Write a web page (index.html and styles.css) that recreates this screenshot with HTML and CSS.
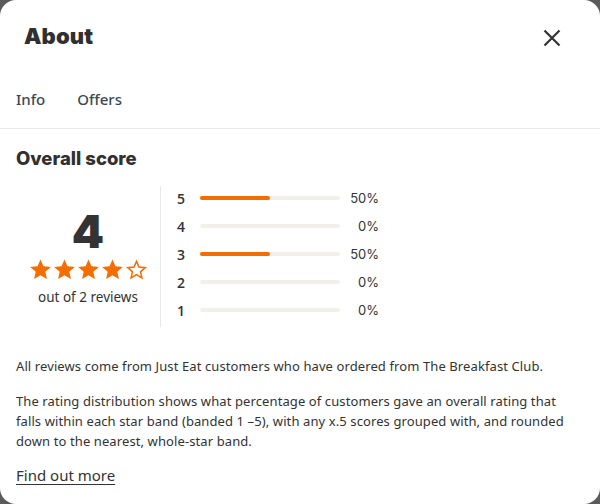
FILE: index.html
```html
<!DOCTYPE html>
<html>
<head>
<meta charset="utf-8">
<link rel="stylesheet" href="styles.css">
</head>
<body>
<div class="modal">
  <header class="head">
    <h1 class="title">About</h1>
    <button class="close" aria-label="Close">
      <svg width="18" height="18" viewBox="0 0 18 18"><path d="M1.5 1.5L16.5 16.5M16.5 1.5L1.5 16.5" stroke="#333" stroke-width="2.2" fill="none"/></svg>
    </button>
  </header>
  <nav class="tabs">
    <span class="tab">Info</span>
    <span class="tab">Offers</span>
  </nav>
  <section class="content">
    <h2 class="subtitle">Overall score</h2>
    <div class="score">
      <div class="summary">
        <div class="big">4</div>
        <div class="stars">
          <svg viewBox="0 0 24 24" class="star"><path d="M12 1.5l3.1 7.1 7.7.7-5.8 5.1 1.7 7.6L12 18l-6.7 4 1.7-7.6-5.8-5.1 7.7-.7z" fill="#f36d00"/></svg>
          <svg viewBox="0 0 24 24" class="star"><path d="M12 1.5l3.1 7.1 7.7.7-5.8 5.1 1.7 7.6L12 18l-6.7 4 1.7-7.6-5.8-5.1 7.7-.7z" fill="#f36d00"/></svg>
          <svg viewBox="0 0 24 24" class="star"><path d="M12 1.5l3.1 7.1 7.7.7-5.8 5.1 1.7 7.6L12 18l-6.7 4 1.7-7.6-5.8-5.1 7.7-.7z" fill="#f36d00"/></svg>
          <svg viewBox="0 0 24 24" class="star"><path d="M12 1.5l3.1 7.1 7.7.7-5.8 5.1 1.7 7.6L12 18l-6.7 4 1.7-7.6-5.8-5.1 7.7-.7z" fill="#f36d00"/></svg>
          <svg viewBox="0 0 24 24" class="star"><path d="M12 3.5l2.6 6 6.5.6-4.9 4.3 1.45 6.4L12 17.4l-5.65 3.4 1.45-6.4-4.9-4.3 6.5-.6z" fill="none" stroke="#f36d00" stroke-width="1.6" stroke-linejoin="miter"/></svg>
        </div>
        <div class="count">out of 2 reviews</div>
      </div>
      <div class="bars">
        <div class="row"><span class="num">5</span><span class="track"><span class="fill" style="width:50%"></span></span><span class="pct">50%</span></div>
        <div class="row"><span class="num">4</span><span class="track"><span class="fill" style="width:0%"></span></span><span class="pct">0%</span></div>
        <div class="row"><span class="num">3</span><span class="track"><span class="fill" style="width:50%"></span></span><span class="pct">50%</span></div>
        <div class="row"><span class="num">2</span><span class="track"><span class="fill" style="width:0%"></span></span><span class="pct">0%</span></div>
        <div class="row"><span class="num">1</span><span class="track"><span class="fill" style="width:0%"></span></span><span class="pct">0%</span></div>
      </div>
    </div>
    <p class="text">All reviews come from Just Eat customers who have ordered from The Breakfast Club.</p>
    <p class="text">The rating distribution shows what percentage of customers gave an overall rating that falls within each star band (banded 1 –5), with any x.5 scores grouped with, and rounded down to the nearest, whole-star band.</p>
    <a class="more" href="#">Find out more</a>
  </section>
</div>
</body>
</html>
```
FILE: styles.css
```css
* { box-sizing: border-box; }
html, body { margin: 0; padding: 0; }
body {
  background: #5b5b5b;
  width: 600px;
  height: 504px;
  overflow: hidden;
  font-family: "Noto Sans", sans-serif;
  color: #333;
}
.modal {
  background: #fff;
  width: 600px;
  height: 504px;
  border-radius: 16px;
  overflow: hidden;
}
.head {
  display: flex;
  align-items: center;
  justify-content: space-between;
  height: 72px;
  padding: 0 39px 0 24px;
}
.title {
  margin: 0;
  font-family: Inter, sans-serif;
  font-weight: 900;
  font-size: 22px;
  color: #303030;
  letter-spacing: 0.1px;
}
.close {
  border: 0;
  background: none;
  padding: 0;
  width: 18px;
  height: 18px;
  display: flex;
  margin-top: 4px;
}
.tabs {
  display: flex;
  gap: 32px;
  padding: 0 16px;
  height: 57px;
  align-items: center;
  border-bottom: 1px solid #ebebeb;
}
.tab {
  font-family: "Noto Sans", sans-serif;
  font-weight: 500;
  font-size: 15px;
  line-height: 20px;
  margin-top: -3px;
  color: #3b4a52;
}
.content { padding: 0 16px; }
.subtitle {
  margin: 17px 0 0;
  font-family: Inter, sans-serif;
  font-weight: 800;
  font-size: 18.5px;
  line-height: 24px;
  color: #303030;
}
.score {
  display: flex;
  margin-top: 14px;
}
.summary {
  width: 145px;
  display: flex;
  flex-direction: column;
  align-items: center;
  justify-content: center;
  border-right: 1px solid #e8e8e8;
  height: 141px;
  margin-top: 2px;
  padding-top: 1px;
}
.big {
  font-family: Inter, sans-serif;
  font-weight: 900;
  font-size: 46px;
  line-height: 46px;
  color: #333;
}
.stars { display: flex; gap: 1px; margin-top: 4px; }
.star { width: 23px; height: 23px; }
.count { font-size: 13.5px; margin-top: 7px; color: #333; }
.bars {
  display: flex;
  flex-direction: column;
  padding-left: 16px;
}
.row {
  display: flex;
  align-items: center;
  height: 28px;
}
.num {
  width: 23px;
  font-family: "Open Sans", sans-serif;
  font-weight: 600;
  font-size: 14px;
  color: #333;
}
.track {
  width: 140px;
  height: 4px;
  border-radius: 2px;
  background: #f3f0eb;
  display: flex;
}
.fill {
  height: 4px;
  border-radius: 2px;
  background: #f36d00;
}
.pct {
  width: 39px;
  text-align: right;
  font-family: Inter, sans-serif;
  font-size: 13px;
  color: #333;
}
.text {
  font-size: 13px;
  letter-spacing: 0.1px;
  line-height: 20px;
  margin: 29px 0 0;
  color: #333;
}
.text + .text { margin-top: 15px; }
.more {
  display: inline-block;
  margin-top: 14px;
  font-size: 15px;
  color: #333;
  text-decoration: underline;
  text-underline-offset: 3px;
}
```
